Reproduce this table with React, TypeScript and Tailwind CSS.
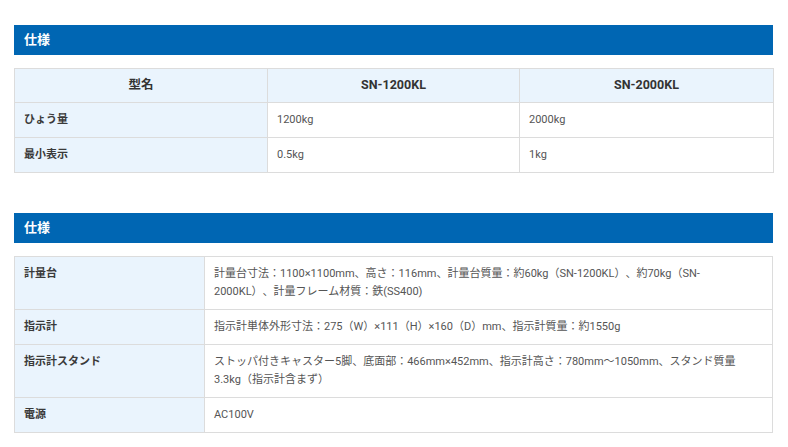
const font = {
  fontFamily: '"Roboto", "Noto Sans CJK JP", sans-serif',
};

function SectionTitle({ title }: { title: string }) {
  return (
    <div className="h-[30px] bg-[#0066b3] flex items-center px-[10px]">
      <h2 className="text-[13px] font-bold text-white">{title}</h2>
    </div>
  );
}

const models = ["SN-1200KL", "SN-2000KL"];

const modelRows = [
  { label: "ひょう量", values: ["1200kg", "2000kg"] },
  { label: "最小表示", values: ["0.5kg", "1kg"] },
];

const specRows = [
  {
    label: "計量台",
    value:
      "計量台寸法：1100×1100mm、高さ：116mm、計量台質量：約60kg（SN-1200KL）、約70kg（SN-2000KL）、計量フレーム材質：鉄(SS400)",
  },
  {
    label: "指示計",
    value: "指示計単体外形寸法：275（W）×111（H）×160（D）mm、指示計質量：約1550g",
  },
  {
    label: "指示計スタンド",
    value:
      "ストッパ付きキャスター5脚、底面部：466mm×452mm、指示計高さ：780mm～1050mm、スタンド質量3.3kg（指示計含まず）",
  },
  { label: "電源", value: "AC100V" },
];

export default function App() {
  return (
    <div
      className="w-[788px] h-[447px] bg-white pl-[14px] pr-[15px] pt-[25px] [text-spacing-trim:space-all]"
      style={font}
    >
      <SectionTitle title="仕様" />
      <table className="mt-[13px] w-[759px] border-collapse table-fixed text-[11px]">
        <colgroup>
          <col className="w-[253px]" />
          <col className="w-[252px]" />
          <col className="w-[254px]" />
        </colgroup>
        <thead>
          <tr className="h-[34px] bg-[#eaf4fd]">
            <th className="border border-[#dcdcdc] text-[12.5px] font-bold text-[#333]">型名</th>
            {models.map((m) => (
              <th key={m} className="border border-[#dcdcdc] text-[12.5px] font-bold text-[#333]">
                {m}
              </th>
            ))}
          </tr>
        </thead>
        <tbody>
          {modelRows.map((row) => (
            <tr key={row.label} className="h-[35px]">
              <td className="border border-[#dcdcdc] bg-[#eaf4fd] px-[9px] font-bold text-[#3a3a3a]">
                {row.label}
              </td>
              {row.values.map((v) => (
                <td key={v} className="border border-[#dcdcdc] px-[9px] text-[#555]">
                  {v}
                </td>
              ))}
            </tr>
          ))}
        </tbody>
      </table>

      <div className="mt-[40px]">
        <SectionTitle title="仕様" />
      </div>
      <table className="mt-[13px] w-[759px] border-collapse table-fixed text-[11px]">
        <colgroup>
          <col className="w-[190px]" />
          <col />
        </colgroup>
        <tbody>
          {specRows.map((row) => (
            <tr key={row.label}>
              <td className="border border-[#dcdcdc] bg-[#eaf4fd] px-[9px] py-[8px] align-top leading-[18px] font-bold text-[#3a3a3a]">
                {row.label}
              </td>
              <td className="border border-[#dcdcdc] pl-[9px] pr-[32px] py-[8px] align-top leading-[18px] text-[#555]">
                {row.value}
              </td>
            </tr>
          ))}
        </tbody>
      </table>
    </div>
  );
}
